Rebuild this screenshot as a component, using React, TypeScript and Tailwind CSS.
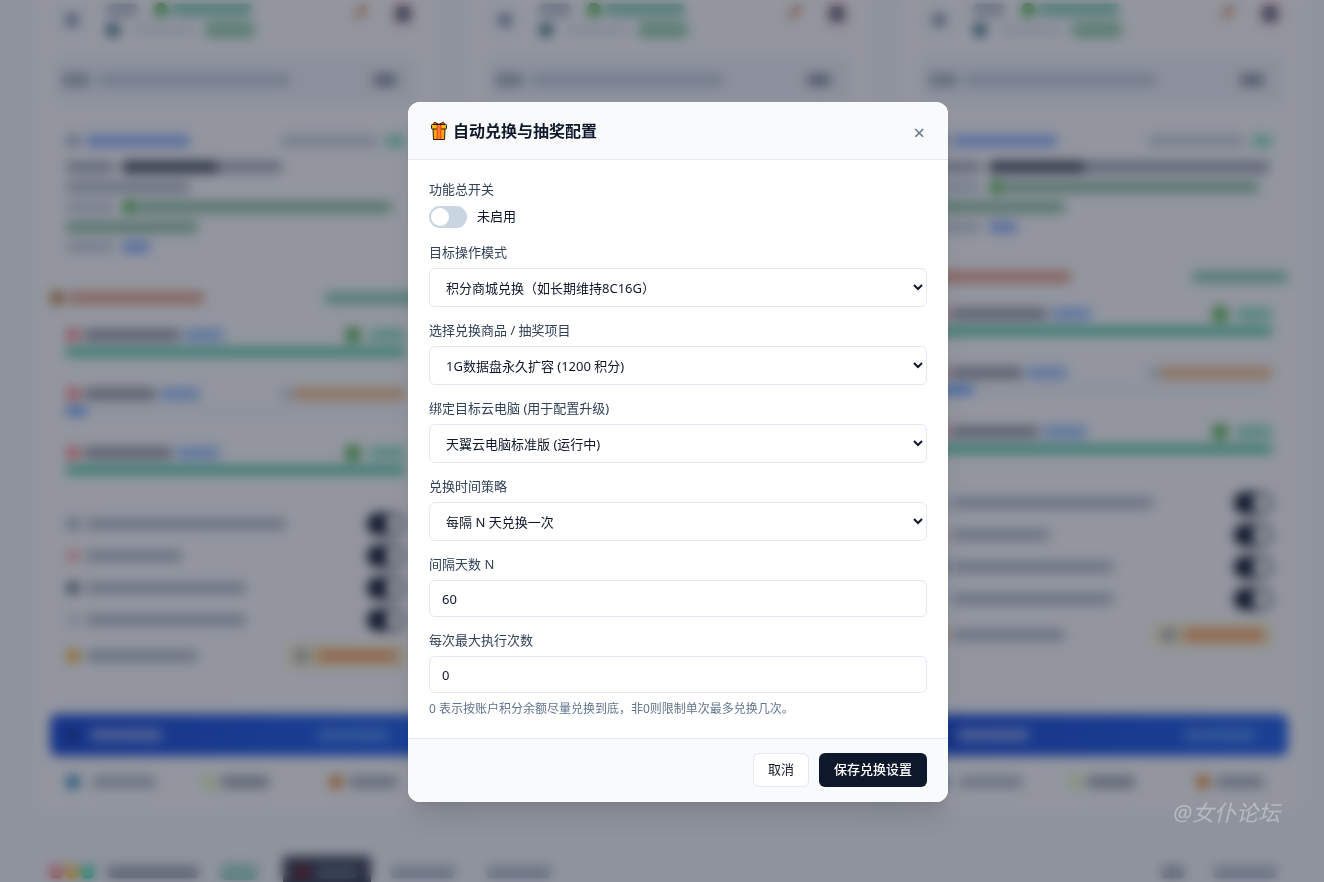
import React, { useState } from "react";
import { ReactElement, ReactNode } from "react";

// block that stands for a run of text while the dialog is open
function Bar({ c }: { c: string }): ReactElement {
  return <span className={"block h-3 shrink-0 rounded-sm opacity-45 " + c}></span>;
}

function Dot({ c }: { c: string }): ReactElement {
  return <span className={"block size-3.5 shrink-0 rounded-full opacity-80 " + c}></span>;
}

function Line({ children }: { children: ReactNode }): ReactElement {
  return <div className="flex h-5 items-center">{children}</div>;
}

const tasks = [
  { name: "w-24", gain: "w-10", done: true },
  { name: "w-18", gain: "w-10", done: false },
  { name: "w-22", gain: "w-11", done: true },
];

const switches = [
  { icon: "bg-slate-400", text: "w-50" },
  { icon: "bg-red-300", text: "w-24" },
  { icon: "bg-slate-600", text: "w-40" },
  { icon: "bg-slate-300", text: "w-40" },
];

function AccountCard({ wide }: { wide: boolean }): ReactElement {
  return (
    <section className="flex h-[812px] min-w-0 flex-col rounded-b-2xl border border-t-0 border-slate-100 bg-white px-[18px] pb-[11px]">
      <div className="flex h-12 items-start">
        <div className="mt-0.5 ml-1 flex size-9 items-center justify-center rounded-full bg-slate-50">
          <span className="size-3 rounded-full bg-slate-500"></span>
        </div>
        <div className="ml-4 flex flex-col">
          <Line>
            <Bar c="w-8 bg-slate-500" />
            <Dot c="ml-4 bg-[#22a022]" />
            <Bar c="ml-1 w-20 bg-emerald-600" />
          </Line>
          <Line>
            <Dot c="bg-cyan-900" />
            <Bar c="ml-3 w-16 bg-slate-300" />
            <span className="ml-2 h-4 w-13 rounded-full bg-[#1f9d4d]/45"></span>
          </Line>
        </div>
        <div className="mt-0.5 ml-auto flex gap-5 pr-1.5">
          <span className="flex size-5 items-center justify-center">
            <span className="h-2 w-4 -rotate-45 rounded bg-amber-700/50"></span>
          </span>
          <span className="flex size-6 items-center justify-center rounded bg-red-100">
            <span className="size-3.5 rounded bg-slate-600"></span>
          </span>
        </div>
      </div>

      <div className="mx-1 mt-2 flex h-12 items-center rounded-lg bg-slate-100 px-2">
        <Bar c="w-7 bg-slate-600" />
        <Bar c="ml-2 w-48 bg-slate-400" />
        <Bar c="mr-3 ml-auto w-6 bg-slate-900" />
      </div>

      <div className="mt-[25px] flex flex-col px-4">
        <div className="flex h-6 items-center">
          <Dot c="bg-slate-400" />
          <Bar c="ml-1.5 w-26 bg-blue-600" />
          <Bar c="ml-auto w-24 bg-slate-400" />
          <Bar c="ml-2 w-5 bg-emerald-500" />
        </div>
        <div className="mt-1 flex h-5 items-center">
          <Bar c="w-12 bg-slate-600" />
          <span className="ml-2 h-3 w-24 rounded-sm bg-slate-900/75"></span>
          <Bar c={wide ? "w-46 bg-slate-700" : "w-16 bg-slate-600"} />
        </div>
        {!wide && (
          <Line>
            <Bar c="w-31 bg-slate-500" />
          </Line>
        )}
        <Line>
          <Bar c="w-12 bg-slate-400" />
          <Dot c="ml-2 bg-[#22a022]" />
          <Bar c="w-64 bg-[#15803d]" />
        </Line>
        <Line>
          <Bar c="w-33 bg-[#15803d]" />
        </Line>
        <Line>
          <Bar c="w-12 bg-slate-400" />
          <Bar c="ml-2 w-7 bg-blue-600" />
        </Line>
      </div>

      <div className={wide ? "mt-[30px] flex h-5 items-center" : "mt-[31px] flex h-5 items-center"}>
        <Dot c="bg-yellow-700" />
        <Bar c="ml-1 w-34 bg-orange-700" />
        <Bar c="ml-auto w-24 bg-[#059669]" />
      </div>

      <div className="mt-[14px] flex flex-col gap-[25px] px-4">
        {tasks.map((task, i) => (
          <div key={i}>
            <div className="flex h-[26px] items-center">
              <Dot c="bg-red-400" />
              <Bar c={"ml-1 bg-slate-800 " + task.name} />
              <Bar c={"ml-1 bg-blue-500 " + task.gain} />
              {task.done ? (
                <>
                  <span className="ml-auto size-4 rounded-full bg-[#22a022]/80"></span>
                  <Bar c="ml-2 w-9 bg-emerald-500" />
                </>
              ) : (
                <>
                  <Dot c="ml-auto bg-slate-300" />
                  <Bar c="w-28 bg-amber-600" />
                </>
              )}
            </div>
            <div className="h-2 bg-slate-100">
              <div
                className={
                  task.done
                    ? "h-2 bg-[#10b981]/80"
                    : wide
                      ? "h-2 w-10 bg-blue-500/80"
                      : "h-2 w-5 bg-blue-500/80"
                }
              ></div>
            </div>
          </div>
        ))}
      </div>

      <div className="mt-[34px] flex flex-col px-4">
        {switches.map((item, i) => (
          <div className="flex h-8 items-center" key={i}>
            <Dot c={item.icon} />
            <Bar c={"ml-1.5 bg-slate-500 " + item.text} />
            <span className="ml-auto flex h-[22px] w-[38px] items-center justify-end rounded-full bg-slate-900 p-0.5">
              <span className="size-[18px] rounded-full bg-white"></span>
            </span>
          </div>
        ))}
        <div className="flex h-10 items-center">
          <Dot c="bg-amber-500" />
          <Bar c="ml-1.5 w-28 bg-slate-500" />
          <span className="ml-auto flex h-6 items-center rounded bg-amber-100 px-2">
            <Dot c="bg-slate-400" />
            <Bar c="ml-2 w-20 bg-orange-600" />
          </span>
        </div>
      </div>

      <div className="mt-auto flex h-[42px] items-center rounded-lg bg-linear-to-r from-[#1d4ed8] to-[#2563eb] px-4">
        <Dot c="bg-blue-950/60" />
        <Bar c="ml-2.5 w-18 bg-white" />
        <Bar c="mr-4 ml-auto w-18 bg-blue-300" />
      </div>
      <div className="mt-2 grid h-9 grid-cols-3 items-center gap-2">
        <div className="flex items-center pl-4">
          <Dot c="bg-sky-700" />
          <Bar c="ml-3 w-16 bg-slate-500" />
        </div>
        <div className="flex items-center justify-center">
          <Dot c="bg-lime-200" />
          <Bar c="ml-1 w-12 bg-slate-700" />
        </div>
        <div className="flex items-center justify-end pr-6">
          <Dot c="bg-amber-600" />
          <Bar c="ml-1.5 w-12 bg-slate-600" />
        </div>
      </div>
    </section>
  );
}

function Dashboard(): ReactElement {
  return (
    <div aria-hidden="true" className="h-screen overflow-hidden bg-slate-50 pr-[17px] pl-[31px]">
      <div className="grid grid-cols-3 gap-6">
        <AccountCard wide={false} />
        <AccountCard wide={false} />
        <AccountCard wide={true} />
      </div>
      <div className="mt-9 flex h-14 items-start px-[18px] pt-2">
        <div className="flex h-8 w-full items-center">
          <Dot c="bg-red-400" />
          <Dot c="ml-0.5 bg-amber-400" />
          <Dot c="ml-0.5 bg-emerald-400" />
          <Bar c="ml-3 w-23 bg-slate-700" />
          <span className="ml-5 h-4 w-10 rounded-full bg-emerald-600/35"></span>
          <span className="ml-6 flex h-8 w-[88px] items-center rounded bg-slate-900/80 px-3">
            <Dot c="bg-red-900" />
            <Bar c="ml-2 w-10 bg-slate-400" />
          </span>
          <Bar c="ml-5 w-16 bg-slate-500" />
          <Bar c="ml-8 w-16 bg-slate-500" />
          <Bar c="ml-auto w-6 bg-slate-600" />
          <Bar c="mr-3 ml-7 w-16 bg-slate-500" />
        </div>
      </div>
    </div>
  );
}

function GiftIcon(): ReactElement {
  return (
    <svg className="h-5 w-[18px]" viewBox="0 0 18 20" aria-hidden="true">
      <path d="M5 4.5L3.4 2.6 4.6 1.2 9 3.4l4.4-2.2 1.2 1.4L13 4.5z" fill="#f2600c" stroke="#2b1a10" strokeWidth="1" strokeLinejoin="round" />
      <path d="M3 7h12l-.5 11.5h-11z" fill="#fcab00" stroke="#2b1a10" strokeWidth="1" strokeLinejoin="round" />
      <rect x="1.5" y="3.5" width="15" height="4.5" rx="0.8" fill="#ffb50a" stroke="#2b1a10" strokeWidth="1" />
      <path d="M6.6 4h4.8v14H6.6z" fill="#f4511e" />
      <path d="M9 4v14" stroke="#ff9a3c" strokeWidth="1.2" />
    </svg>
  );
}

const labelStyle = "block text-[13px] leading-[18px] text-slate-700";
const selectStyle =
  "block h-[39px] w-full rounded-md border border-slate-200 bg-white px-3 text-[13px] text-slate-900";
const inputStyle =
  "block h-[37px] w-full rounded-md border border-slate-200 bg-white px-3 text-[13px] text-slate-900";

const selects = [
  { id: "mode", label: "目标操作模式", value: "积分商城兑换（如长期维持8C16G）" },
  { id: "goods", label: "选择兑换商品 / 抽奖项目", value: "1G数据盘永久扩容 (1200 积分)" },
  { id: "desktop", label: "绑定目标云电脑 (用于配置升级)", value: "天翼云电脑标准版 (运行中)" },
  { id: "strategy", label: "兑换时间策略", value: "每隔 N 天兑换一次" },
];

function ExchangeDialog(): ReactElement {
  const [enabled, setEnabled] = useState(false);
  const [days, setDays] = useState("60");
  const [times, setTimes] = useState("0");

  return (
    <div
      role="dialog"
      aria-labelledby="dialog-title"
      className="w-full max-w-[540px] overflow-hidden rounded-xl bg-white shadow-xl"
    >
      <header className="flex h-[58px] items-center justify-between border-b border-slate-200 bg-slate-50 pr-[23px] pl-[22px]">
        <h2 id="dialog-title" className="flex items-center gap-[5px] text-base font-bold text-slate-900">
          <GiftIcon />
          自动兑换与抽奖配置
        </h2>
        <button type="button" aria-label="关闭" className="pt-1 text-xl leading-5 text-slate-500">
          ×
        </button>
      </header>

      <form className="flex flex-col gap-[14px] px-[21px] py-5">
        <div className="flex flex-col gap-[7px]">
          <label htmlFor="enabled" className={labelStyle}>
            功能总开关
          </label>
          <div className="flex h-6 items-center gap-[10px]">
            <input
              id="enabled"
              type="checkbox"
              checked={enabled}
              onChange={(e) => setEnabled(e.target.checked)}
              className="flex h-[22px] w-[38px] appearance-none items-center rounded-full bg-slate-300 px-0.5 before:size-[18px] before:rounded-full before:bg-white checked:justify-end checked:bg-slate-900"
            />
            <span className="text-[13px] text-slate-900">{enabled ? "已启用" : "未启用"}</span>
          </div>
        </div>

        {selects.map(({ id, label, value }) => (
          <div className="flex flex-col gap-[7px]" key={id}>
            <label htmlFor={id} className={labelStyle}>
              {label}
            </label>
            <select id={id} className={selectStyle}>
              <option>{value}</option>
            </select>
          </div>
        ))}

        <div className="flex flex-col gap-[7px]">
          <label htmlFor="days" className={labelStyle}>
            间隔天数 N
          </label>
          <input id="days" value={days} onChange={(e) => setDays(e.target.value)} className={inputStyle} />
        </div>

        <div className="flex flex-col gap-[7px]">
          <label htmlFor="times" className={labelStyle}>
            每次最大执行次数
          </label>
          <input id="times" value={times} onChange={(e) => setTimes(e.target.value)} className={inputStyle} />
          <p className="text-xs leading-[18px] text-slate-500">
            0 表示按账户积分余额尽量兑换到底，非0则限制单次最多兑换几次。
          </p>
        </div>
      </form>

      <footer className="flex justify-end gap-[10px] border-t border-slate-200 bg-slate-50 px-[21px] pt-[14px] pb-[15px]">
        <button
          type="button"
          className="h-[34px] rounded-md border border-slate-200 bg-white px-[14px] text-[13px] text-slate-900"
        >
          取消
        </button>
        <button
          type="button"
          className="h-[34px] rounded-md bg-slate-900 px-[15px] text-[13px] font-medium text-white"
        >
          保存兑换设置
        </button>
      </footer>
    </div>
  );
}

function App(): ReactElement {
  return (
    <div className="relative font-['Noto_Sans','Noto_Sans_CJK_SC',sans-serif]">
      <Dashboard />
      <div className="fixed inset-0 flex items-center justify-center bg-slate-900/45 pt-[22px] pl-8 backdrop-blur-[6px]">
        <ExchangeDialog />
      </div>
      <span className="fixed right-11 bottom-14 text-[22px] leading-7 text-white/35 italic">@女仆论坛</span>
    </div>
  );
}

export default App;
